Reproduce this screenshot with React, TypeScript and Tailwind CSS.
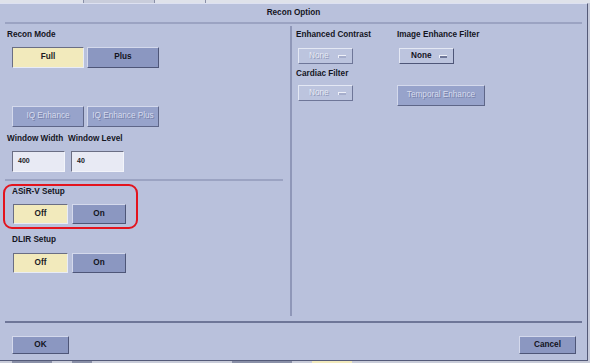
type Variant = "on" | "off" | "disabled";

const font = { fontFamily: '"Liberation Sans", Arial, sans-serif' };

function Btn({
  label,
  variant,
  className
}: {
  label: string;
  variant: Variant;
  className: string;
}) {
  const look =
    variant === "on"
      ? "bg-[#f2eabc] border-t-[#6a6e84] border-l-[#6a6e84] border-b-[#e8ecf6] border-r-[#e8ecf6] text-[#1a1a24] font-bold"
      : variant === "off"
        ? "bg-[#8b97c1] border-t-[#d4d9ec] border-l-[#d4d9ec] border-b-[#4e5678] border-r-[#4e5678] text-[#12131c] font-bold"
        : "bg-[#97a3cb] border-t-[#d4d9ec] border-l-[#d4d9ec] border-b-[#5e6688] border-r-[#5e6688] text-[#d6dbee] [text-shadow:1px_1px_0_#7680a8]";
  return (
    <div
      className={[
        "flex items-center justify-center border text-[8.2px] leading-none",
        look,
        className
      ].join(" ")}
    >
      {label}
    </div>
  );
}

function Dropdown({ disabled, className }: { disabled: boolean; className: string }) {
  return (
    <div
      className={[
        "flex h-[16px] items-center justify-between border pl-[10px] pr-[6px] text-[8.2px] leading-none",
        disabled
          ? "bg-[#bcc4de] border-t-[#e4e8f4] border-l-[#e4e8f4] border-b-[#6e7698] border-r-[#6e7698] text-[#e6e9f4] [text-shadow:1px_1px_0_#8e96b6]"
          : "bg-[#bcc4de] border-t-[#e4e8f4] border-l-[#e4e8f4] border-b-[#4e5678] border-r-[#4e5678] font-bold text-[#14151e]",
        className
      ].join(" ")}
    >
      <span className={disabled ? "" : "pl-[1px]"}>None</span>
      <span
        className={[
          "h-[3px] w-[8px] border-t border-l border-t-[#eef0f8] border-l-[#eef0f8]",
          disabled ? "bg-[#a6aecc]" : "bg-[#6e7698]"
        ].join(" ")}
      />
    </div>
  );
}

function Label({ text, className = "" }: { text: string; className?: string }) {
  return (
    <div className={["h-[10px] text-[8.2px] font-bold leading-[10px] text-[#14151e]", className].join(" ")}>
      {text}
    </div>
  );
}

function NumField({ value, className }: { value: string; className: string }) {
  return (
    <div
      className={[
        "flex h-[21px] w-[53px] items-center border border-t-[#6a6e84] border-l-[#6a6e84] border-b-[#f2f4fa] border-r-[#f2f4fa] bg-[#e8eaf4] pl-[5px] text-[7px] font-bold text-[#1a1a24]",
        className
      ].join(" ")}
    >
      {value}
    </div>
  );
}

export default function App() {
  return (
    <div className="relative flex h-[363px] w-[590px] flex-col overflow-hidden bg-[#c6cadb]" style={font}>
      {/* strip of the window underneath */}
      <div className="flex h-[3px] bg-[#dfe2ea]">
        <div className="ml-[83px] h-[3px] w-[72px] border-x border-[#8a90a8] bg-[#c9cddb]" />
        <div className="ml-[50px] h-[3px] w-[1px] bg-[#8a90a8]" />
      </div>

      <div className="flex h-[358px] w-[588px] flex-col border-t border-r border-b border-t-[#dde1f1] border-r-[#545a78] border-b-[#545a78] bg-[#b9c1dc]">
        <div className="flex h-[18px] items-center justify-center pt-[1px] text-[8.2px] font-bold text-[#14151e]">
          Recon Option
        </div>
        <div className="mx-[5px] h-[2px] bg-[#9ba3c2]" />

        <div className="flex h-[297px]">
          {/* left column */}
          <div className="relative flex w-[290px] flex-col">
            <Label text="Recon Mode" className="ml-[7px] mt-[6px]" />
            <div className="ml-[12px] mt-[7px] flex gap-[3px]">
              <Btn label="Full" variant="on" className="h-[21px] w-[72px]" />
              <Btn label="Plus" variant="off" className="h-[21px] w-[72px]" />
            </div>
            <div className="ml-[12px] mt-[38px] flex gap-[3px]">
              <Btn label="IQ Enhance" variant="disabled" className="h-[21px] w-[72px]" />
              <Btn label="IQ Enhance Plus" variant="disabled" className="h-[21px] w-[72px]" />
            </div>
            <div className="ml-[7px] mt-[7px] flex">
              <Label text="Window Width" className="w-[61px]" />
              <Label text="Window Level" />
            </div>
            <div className="ml-[12px] mt-[7px] flex gap-[6px]">
              <NumField value="400" className="" />
              <NumField value="40" className="" />
            </div>
            <div className="ml-[5px] mr-[7px] mt-[7px] h-[2px] bg-[#9ba3c2]" />
            <Label text="ASiR-V Setup" className="ml-[12px] mt-[6px]" />
            <div className="ml-[13px] mt-[7px] flex gap-[4px]">
              <Btn label="Off" variant="on" className="h-[20px] w-[55px]" />
              <Btn label="On" variant="off" className="h-[20px] w-[54px]" />
            </div>
            <Label text="DLIR Setup" className="ml-[12px] mt-[11px]" />
            <div className="ml-[13px] mt-[8px] flex gap-[4px]">
              <Btn label="Off" variant="on" className="h-[20px] w-[55px]" />
              <Btn label="On" variant="off" className="h-[20px] w-[54px]" />
            </div>

            {/* red highlight ring */}
            <div className="absolute left-[3px] top-[160px] h-[45px] w-[135px] rounded-[9px] border-2 border-[#e3141e]" />
          </div>

          <div className="mt-[2px] h-[290px] w-[2px] bg-[#8f97b8]" />

          {/* right column */}
          <div className="flex pl-[4px]">
            <div className="flex w-[101px] flex-col">
              <Label text="Enhanced Contrast" className="mt-[6px]" />
              <Dropdown disabled className="ml-[2px] mt-[8px] w-[55px]" />
              <Label text="Cardiac Filter" className="mt-[5px]" />
              <Dropdown disabled className="ml-[2px] mt-[6px] w-[55px]" />
            </div>
            <div className="flex flex-col">
              <Label text="Image Enhance Filter" className="mt-[6px]" />
              <Dropdown disabled={false} className="ml-[2px] mt-[8px] w-[55px]" />
              <Btn
                label="Temporal Enhance"
                variant="disabled"
                className="mt-[21px] h-[21px] w-[88px]"
              />
            </div>
          </div>
        </div>

        <div className="mx-[5px] h-[2px] bg-[#6e7698]" />
        <div className="flex h-[36px] items-start justify-between pl-[12px] pr-[11px] pt-[13px]">
          <Btn label="OK" variant="off" className="h-[18px] w-[57px]" />
          <Btn label="Cancel" variant="off" className="h-[18px] w-[57px]" />
        </div>
      </div>

      <div className="flex h-[2px] gap-[20px] bg-[#c9ccd9] pl-[12px]">
        <div className="h-[2px] w-[40px] bg-[#8a90a8]" />
        <div className="h-[2px] w-[20px] bg-[#8a90a8]" />
        <div className="ml-[120px] h-[2px] w-[60px] bg-[#8a90a8]" />
        <div className="h-[2px] w-[40px] bg-[#f2eabc]" />
      </div>
    </div>
  );
}
